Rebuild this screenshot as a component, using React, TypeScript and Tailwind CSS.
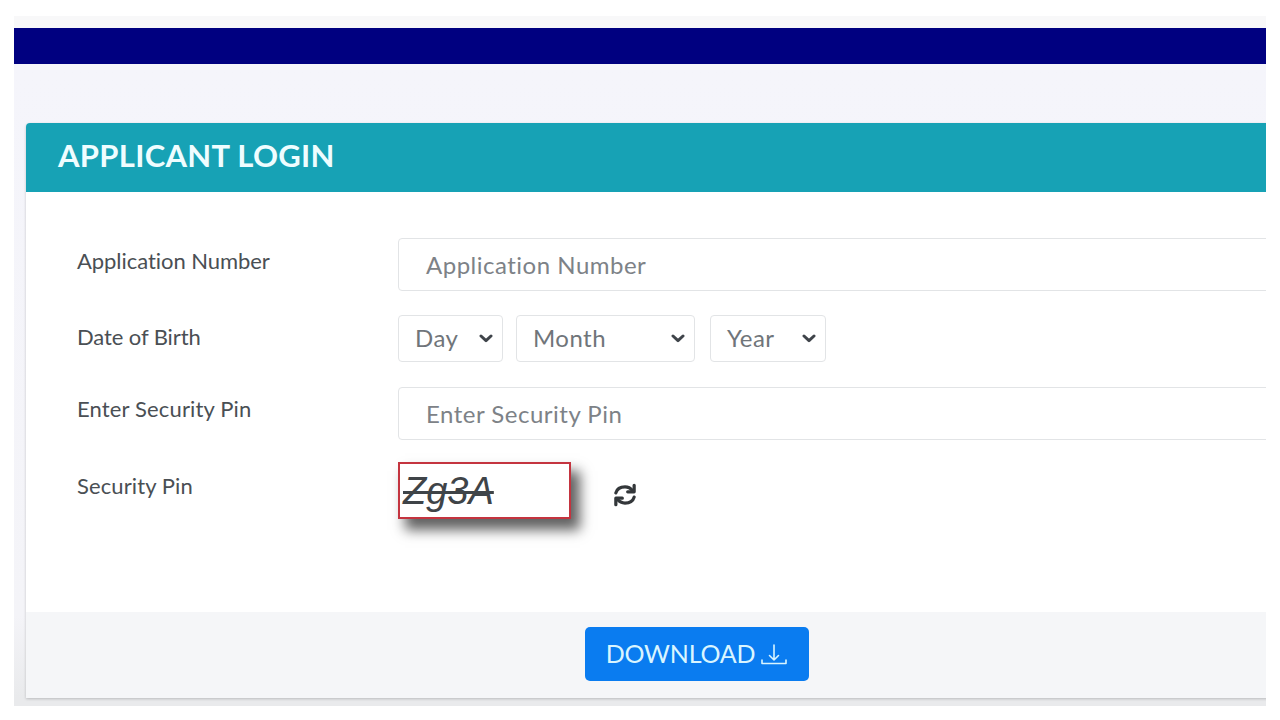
import React from "react";

function Chevron() {
  return (
    <svg width="14" height="9" viewBox="0 0 14 9" fill="none" stroke="#3f444a" strokeWidth="3" strokeLinecap="round" strokeLinejoin="round">
      <path d="M2 2l5 4.600L12 2" />
    </svg>
  );
}

function FakeSelect({ label, width, gap }: { label: string; width: string; gap: string }) {
  return (
    <div className={`${width} ${gap} h-[47px] flex items-center justify-between pl-[16px] pr-[9px] border border-[#e2e4e6] rounded-[4px] bg-white text-[#70757a] text-[24px] tracking-[0.45px]`}>
      <span className="pb-[1px]">{label}</span>
      <Chevron />
    </div>
  );
}

function Field({ text }: { text: string }) {
  return (
    <div className="h-[53px] flex items-center pl-[27px] border border-[#e2e4e6] rounded-[4px] bg-white text-[#7d8287] text-[24px] tracking-[0.5px]">
      {text}
    </div>
  );
}

export default function App() {
  return (
    <div className="w-[1280px] h-[720px] bg-white overflow-hidden font-['Lato',sans-serif] pt-[16px] pl-[14px]">
      <div className="w-[1252px] h-[690px] bg-[linear-gradient(to_bottom,#f8f8f9_0px,#f8f8f9_12px,#f5f5fb_48px,#f4f4f8_600px,#e9eaec_682px)] overflow-hidden pt-[12px]">
        <div className="h-[36px] bg-[#000080]" />
        <div className="ml-[12px] mt-[59px] w-[1300px] h-[575px] bg-white rounded-t-[4px] shadow-[0_1px_3px_rgba(0,0,0,0.2)] flex flex-col">
          <div className="h-[69px] bg-[#17a2b5] rounded-t-[4px] flex items-center pl-[32px] pb-[5px] text-[#effdff] text-[31px] font-bold tracking-[0.3px]">
            APPLICANT LOGIN
          </div>
          <div className="flex-1 pt-[46px] grid grid-cols-[372px_1fr] grid-rows-[77px_72px_75px_auto] text-[#4a4f54] text-[22px] leading-[30px]">
            <div className="pl-[51px] pt-[8px] tracking-[-0.05px]">Application Number</div>
            <div><Field text="Application Number" /></div>
            <div className="pl-[51px] pt-[7px] tracking-[-0.1px]">Date of Birth</div>
            <div className="flex">
              <FakeSelect label="Day" width="w-[105px]" gap="mr-[13px]" />
              <FakeSelect label="Month" width="w-[179px]" gap="mr-[15px]" />
              <FakeSelect label="Year" width="w-[116px]" gap="" />
            </div>
            <div className="pl-[51px] pt-[7px] tracking-[0.15px]">Enter Security Pin</div>
            <div><Field text="Enter Security Pin" /></div>
            <div className="pl-[51px] pt-[9px] tracking-[0.1px]">Security Pin</div>
            <div className="flex items-center h-[57px]">
              <div className="w-[173px] h-[57px] border-2 border-[#c4343f] bg-white shadow-[8px_10px_12px_1px_rgba(0,0,0,0.62)] flex items-start pl-[3px] pt-[5px]">
                <span className="font-['Liberation_Sans',sans-serif] italic text-[38px] leading-[44px] text-[#3f4448] line-through">Zg3A</span>
              </div>
              <svg className="ml-[40px] mt-[8px]" width="28" height="28" viewBox="0 0 26 26" fill="none" stroke="#33373a" strokeWidth="3" strokeLinecap="round" strokeLinejoin="round">
                <path d="M4.500 11C5.600 7.200 9 5.500 13 5.500c3 0 5.200 1.200 7 3.500" />
                <path d="M21.500 4v6h-6" />
                <path d="M21.500 15c-1.100 3.800-4.500 5.500-8.500 5.500-3 0-5.200-1.200-7-3.500" />
                <path d="M4.500 22v-6h6" />
              </svg>
            </div>
          </div>
          <div className="h-[86px] bg-[#f5f6f8] flex pl-[559px] pt-[15px]">
            <div className="w-[224px] h-[54px] bg-[#0a7cf0] rounded-[5px] flex items-center justify-center gap-[5px] text-[#d9f5ff] text-[25px] tracking-[-0.2px]">
              <span>DOWNLOAD</span>
              <svg width="28" height="24" viewBox="0 0 28 24" fill="none" stroke="#d9f5ff" strokeWidth="1.600" strokeLinecap="round" strokeLinejoin="round">
                <path d="M14 3v15M9.500 13.500L14 18l4.500-4.500" />
                <path d="M2 18v3.500h24V18" />
              </svg>
            </div>
          </div>
        </div>
      </div>
    </div>
  );
}
